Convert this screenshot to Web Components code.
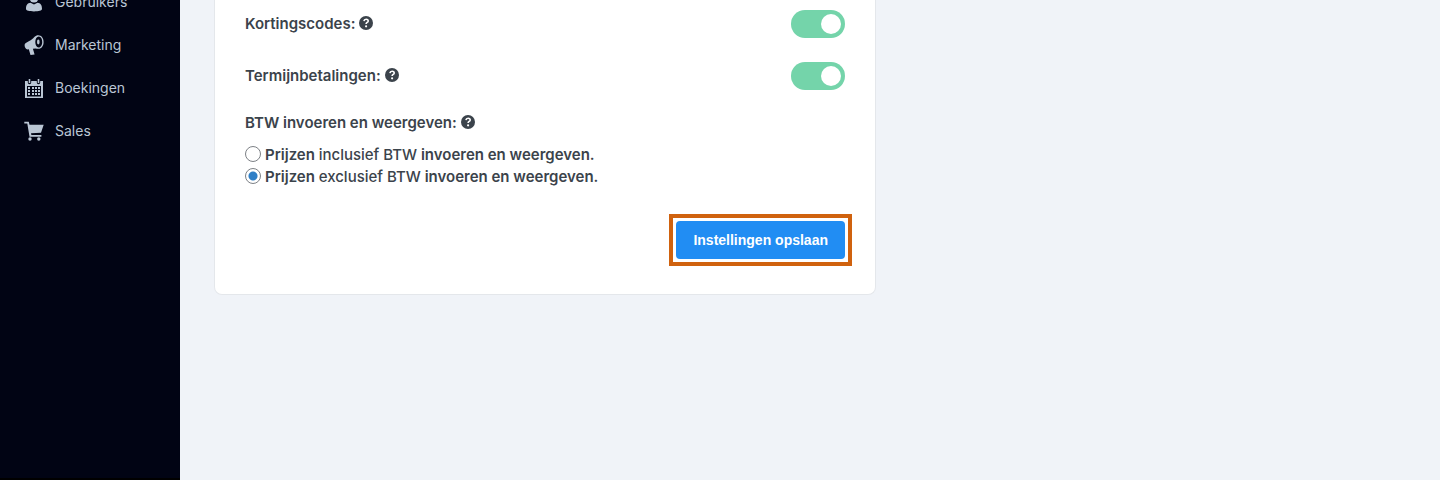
<!DOCTYPE html>
<html lang="nl">
<head>
<meta charset="utf-8">
<meta name="viewport" content="width=device-width, initial-scale=1">
<title>Instellingen</title>
<style>
  body {
    margin: 0;
    background: #f0f3f8;
    color: #3b434b;
    font: 600 15px/22px Inter, "Liberation Sans", sans-serif;
  }
</style>
</head>
<body>
<plug-layout>
  <plug-sidebar slot="sidebar">
    <plug-nav-item icon="users">Gebruikers</plug-nav-item>
    <plug-nav-item icon="marketing">Marketing</plug-nav-item>
    <plug-nav-item icon="calendar">Boekingen</plug-nav-item>
    <plug-nav-item icon="cart">Sales</plug-nav-item>
  </plug-sidebar>
  <plug-settings></plug-settings>
</plug-layout>

<script>
const icons = {
  users: '<circle cx="10" cy="6" r="4.500"/><path d="M2 17c0-4 1.500-5.800 4.500-6.200L10 12.500l3.500-1.700c3 .4 4.500 2.200 4.500 6.200 0 1.500-3.200 2.400-8 2.400S2 18.500 2 17z"/>',
  marketing: '<path fill-rule="evenodd" d="M.6 10.300c0-1.200.6-2 1.600-2.600C6 5.800 8.500 4 10.600 1.700 11.500.8 12.800.2 14.200.2c3.300 0 5.400 2.900 5.400 6.700s-2 6.800-5.200 6.800c-1 0-1.900-.3-2.900-.3l-2.600.4 1.700 5.700-4.100.5-1.700-5.700-1.300.1C1.800 14.200.6 12.500.6 10.300zM14.800 1.500c-2 0-3.500 2.200-3.500 5.300s1.400 5.600 3.400 5.600 3.500-2.400 3.500-5.500-1.400-5.400-3.400-5.400z"/><ellipse cx="14.300" cy="7" rx="1.300" ry="2.400"/>',
  calendar: '<path fill-rule="evenodd" d="M1 3h2.800v1.600a1.700 1.700 0 0 0 3.400 0V3h5.600v1.600a1.700 1.700 0 0 0 3.400 0V3H19v17H1zM3 8v10.500h14V8z"/><path d="M4.700 1h1.600v4H4.700zM13.700 1h1.600v4h-1.600z"/><path d="M4 9h2v2H4zM8 9h2v2H8zM11 9h2v2h-2zM14 9h2v2h-2zM4 12h2v2H4zM8 12h2v2H8zM11 12h2v2h-2zM14 12h2v2h-2zM4 15h2v2H4zM8 15h2v2H8zM11 15h2v2h-2zM14 15h2v2h-2z"/>',
  cart: '<path d="M.3.800h4.500l.7 2.900h14.200l-2.700 8.100-10 .5.400 1.700h10v1.700H5.500L3.300 2.600h-3z"/><circle cx="6" cy="18" r="1.700"/><circle cx="14.800" cy="18" r="1.700"/>'
};

class PlugLayout extends HTMLElement {
  constructor () {
    super();
    this.attachShadow({ mode: 'open' });
  }

  connectedCallback () {
    this.shadowRoot.innerHTML = `
    <style>
      :host { display: flex; min-height: 100vh; overflow: hidden; }
      main { flex: 1; min-width: 0; padding: 0 34px; }
    </style>
    <slot name="sidebar"></slot>
    <main><slot></slot></main>
    `;
  }
}

class PlugSidebar extends HTMLElement {
  constructor () {
    super();
    this.attachShadow({ mode: 'open' });
  }

  connectedCallback () {
    this.shadowRoot.innerHTML = `
    <style>
      :host {
        box-sizing: border-box;
        flex: 0 0 180px;
        background: #010414;
        border-bottom: 2px solid #000;
      }
      /* the list is scrolled up, its first item is cut by the window */
      nav { margin-top: -20px; }
    </style>
    <nav><slot></slot></nav>
    `;
  }
}

class PlugNavItem extends HTMLElement {
  constructor () {
    super();
    this.attachShadow({ mode: 'open' });
  }

  connectedCallback () {
    this.shadowRoot.innerHTML = `
    <style>
      :host { display: block; }
      a {
        display: flex;
        align-items: center;
        gap: 11px;
        height: 43px;
        padding-left: 24px;
        color: #bac6d4;
        font-size: 14px;
        font-weight: 400;
        text-decoration: none;
      }
      svg { width: 20px; height: 20px; fill: currentColor; }
    </style>
    <a href="#">
      <svg viewBox="0 0 20 20" aria-hidden="true">${icons[this.getAttribute('icon')]}</svg>
      <slot></slot>
    </a>
    `;
  }
}

class PlugHelp extends HTMLElement {
  constructor () {
    super();
    this.attachShadow({ mode: 'open' });
  }

  connectedCallback () {
    this.shadowRoot.innerHTML = `
    <style>
      :host { display: inline-block; width: 14px; height: 16px; }
      svg { display: block; }
    </style>
    <svg width="14" height="14" viewBox="0 0 14 14" aria-hidden="true">
      <circle cx="7" cy="7" r="7" fill="#3b434b"/>
      <path d="M4.900 5.100C5.100 3.800 5.900 3.200 7.100 3.200s2.100.7 2.100 1.700c0 1.600-2.100 1.500-2.100 3.100" fill="none" stroke="#fff" stroke-width="1.600"/>
      <circle cx="7.100" cy="10.300" r="1.100" fill="#fff"/>
    </svg>
    `;
  }
}

class PlugSwitch extends HTMLElement {
  constructor () {
    super();
    this.attachShadow({ mode: 'open' });
  }

  connectedCallback () {
    this.shadowRoot.innerHTML = `
    <style>
      :host { display: block; }
      div { display: flex; align-items: center; justify-content: space-between; }
      label { display: flex; align-items: center; gap: 4px; }
      input {
        appearance: none;
        display: flex;
        align-items: center;
        box-sizing: border-box;
        width: 54px;
        height: 28px;
        margin: 0;
        padding: 0 4px;
        border-radius: 14px;
        background: #ccd2d9;
      }
      input::before {
        content: "";
        width: 20px;
        height: 20px;
        border-radius: 50%;
        background: #fff;
      }
      input:checked { justify-content: flex-end; background: #74d4aa; }
    </style>
    <div>
      <label for="switch"><slot></slot><plug-help></plug-help></label>
      <input type="checkbox" role="switch" id="switch" checked>
    </div>
    `;
  }
}

class PlugSettings extends HTMLElement {
  constructor () {
    super();
    this.attachShadow({ mode: 'open' });
  }

  static get styles () {
    return `
      :host { display: block; max-width: 662px; }
      form {
        padding: 10px 30px 28px;
        background: #fff;
        border: 1px solid #e4e7eb;
        border-top: 0;
        border-radius: 0 0 8px 8px;
      }
      .switches { display: grid; gap: 24px; }
      fieldset { margin: 22px 0 0; padding: 0; border: 0; }
      legend {
        display: flex;
        align-items: center;
        gap: 4px;
        margin-bottom: 10px;
        padding: 0;
      }
      .option { display: flex; align-items: center; gap: 4px; }
      .option span { font-weight: 500; }
      input {
        appearance: none;
        box-sizing: border-box;
        width: 16px;
        height: 16px;
        margin: 0 0 2px;
        border: 1px solid #7d8186;
        border-radius: 50%;
      }
      input:checked { background: radial-gradient(circle, #2f7fc6 4px, #fff 5px); }
      /* the frame sticks out of the column, so the button stays in line with the switches */
      .actions { display: flex; justify-content: flex-end; margin: 26px -7px 0 0; }
      .frame { display: flex; padding: 3px; border: 4px solid #d0620e; }
      button {
        height: 38px;
        padding: 0 17px;
        border: 0;
        border-radius: 4px;
        background: #218df3;
        color: #fff;
        font: 700 14px "Liberation Sans", Arial, sans-serif;
      }
    `;
  }

  connectedCallback () {
    this.shadowRoot.innerHTML = `
    <style>${PlugSettings.styles}</style>
    <form>
      <div class="switches">
        <plug-switch>Kortingscodes:</plug-switch>
        <plug-switch>Termijnbetalingen:</plug-switch>
      </div>
      <fieldset>
        <legend>BTW invoeren en weergeven: <plug-help></plug-help></legend>
        <div class="option">
          <input type="radio" name="btw" id="incl">
          <label for="incl">Prijzen <span>inclusief BTW</span> invoeren en weergeven.</label>
        </div>
        <div class="option">
          <input type="radio" name="btw" id="excl" checked>
          <label for="excl">Prijzen <span>exclusief BTW</span> invoeren en weergeven.</label>
        </div>
      </fieldset>
      <div class="actions">
        <div class="frame"><button type="button">Instellingen opslaan</button></div>
      </div>
    </form>
    `;
  }
}

customElements.define('plug-layout', PlugLayout);
customElements.define('plug-sidebar', PlugSidebar);
customElements.define('plug-nav-item', PlugNavItem);
customElements.define('plug-help', PlugHelp);
customElements.define('plug-switch', PlugSwitch);
customElements.define('plug-settings', PlugSettings);
</script>
</body>
</html>
